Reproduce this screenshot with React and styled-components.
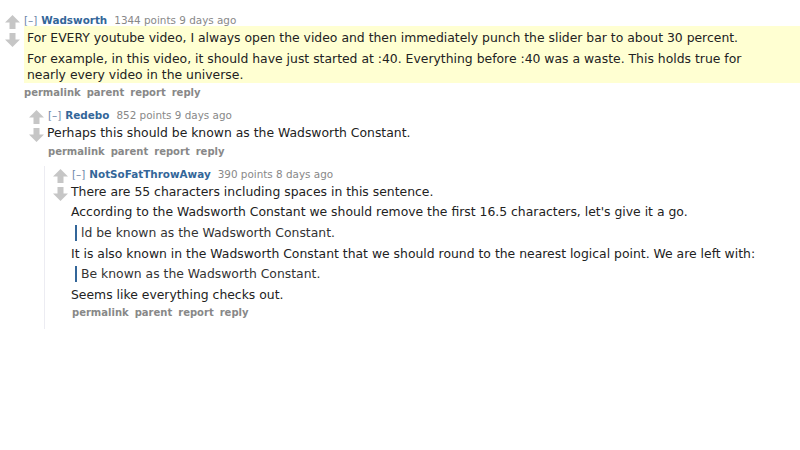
import React from 'react';
import styled, { createGlobalStyle } from 'styled-components';

const GlobalStyle = createGlobalStyle`
  html, body {
    margin: 0;
    padding: 0;
    background: #fff;
  }
  body {
    font-family: "DejaVu Sans", Verdana, sans-serif;
    color: #222;
  }
`;

const Page = styled.div`
  width: 800px;
  height: 450px;
  overflow: hidden;
  padding-top: 14px;
  box-sizing: border-box;
`;

const CommentBox = styled.div`
  padding-top: ${(p) => (p.$nested ? '2px' : '0')};
  padding-left: 5px;
  padding-bottom: ${(p) => (p.$nested ? '10px' : '0')};
`;

const Row = styled.div`
  display: flex;
`;

const Midcol = styled.div`
  width: 19px;
  flex-shrink: 0;
  display: flex;
  flex-direction: column;
  gap: 4px;
  padding-top: 1px;
`;

const Entry = styled.div`
  flex: 1;
  min-width: 0;
`;

const Tagline = styled.div`
  font-size: 10.4px;
  line-height: 12px;
  color: #888;
  white-space: nowrap;
`;

const Expand = styled.span`
  color: #6b86a8;
  margin-right: 4px;
`;

const Author = styled.span`
  color: #369;
  font-weight: bold;
  margin-right: 7px;
`;

const Body = styled.div`
  background: ${(p) => (p.$highlight ? '#ffffd2' : 'transparent')};
  padding: 4px ${(p) => (p.$highlight ? '3px' : '0')} 0;
  margin-left: ${(p) => (p.$highlight ? '0' : '-1px')};
  font-size: 12.4px;
  line-height: 16px;
  color: #222;
`;

const Para = styled.p`
  margin: 0 0 4.6px;
  max-width: 740px;
`;

const Quote = styled.blockquote`
  margin: 0 0 4.6px 4px;
  padding-left: 4px;
  border-left: 2px solid #336699;
  color: #333;
`;

const Buttons = styled.ul`
  display: flex;
  gap: 6px;
  list-style: none;
  margin: 0;
  padding: 0;
  font-size: 10px;
  line-height: 12px;
  font-weight: bold;
  color: #888;
`;

const ChildList = styled.div`
  margin: 8px 0 0 15px;
  padding-left: 3px;
  border-left: 1px solid ${(p) => (p.$line ? '#ececf2' : 'transparent')};
`;

const Arrow = ({ down }) => (
  <svg width="15" height="14" viewBox="0 0 15 14" style={down ? { transform: 'rotate(180deg)' } : undefined}>
    <path d="M7.5 0 L15 7.5 L10.5 7.5 L10.5 14 L4.5 14 L4.5 7.5 L0 7.5 Z" fill="#c6c6c6" />
  </svg>
);

const Comment = ({ author, points, age, highlight, nested, line, children, replies }) => (
  <CommentBox $nested={nested}>
    <Row>
      <Midcol>
        <Arrow />
        <Arrow down />
      </Midcol>
      <Entry>
        <Tagline>
          <Expand>[–]</Expand>
          <Author>{author}</Author>
          {points} points {age}
        </Tagline>
        <Body $highlight={highlight}>{children}</Body>
        <Buttons>
          <li>permalink</li>
          <li>parent</li>
          <li>report</li>
          <li>reply</li>
        </Buttons>
      </Entry>
    </Row>
    {replies && <ChildList $line={line}>{replies}</ChildList>}
  </CommentBox>
);

export default function App() {
  return (
    <Page>
      <GlobalStyle />
      <Comment
        author="Wadsworth"
        points="1344"
        age="9 days ago"
        highlight
        replies={
          <Comment
            nested
            author="Redebo"
            points="852"
            age="9 days ago"
            line
            replies={
              <Comment nested author="NotSoFatThrowAway" points="390" age="8 days ago">
                <Para>There are 55 characters including spaces in this sentence.</Para>
                <Para>
                  According to the Wadsworth Constant we should remove the first 16.5 characters, let's give it a go.
                </Para>
                <Quote>
                  <Para>ld be known as the Wadsworth Constant.</Para>
                </Quote>
                <Para>
                  It is also known in the Wadsworth Constant that we should round to the nearest logical point. We are
                  left with:
                </Para>
                <Quote>
                  <Para>Be known as the Wadsworth Constant.</Para>
                </Quote>
                <Para>Seems like everything checks out.</Para>
              </Comment>
            }
          >
            <Para>Perhaps this should be known as the Wadsworth Constant.</Para>
          </Comment>
        }
      >
        <Para>
          For EVERY youtube video, I always open the video and then immediately punch the slider bar to about 30
          percent.
        </Para>
        <Para>
          For example, in this video, it should have just started at :40. Everything before :40 was a waste. This
          holds true for nearly every video in the universe.
        </Para>
      </Comment>
    </Page>
  );
}
